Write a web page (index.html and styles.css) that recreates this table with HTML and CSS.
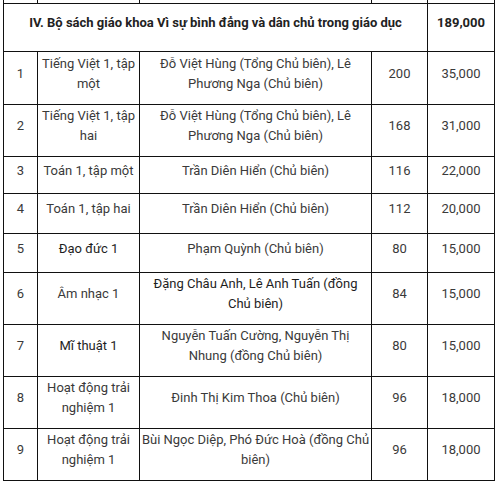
FILE: index.html
```html
<!DOCTYPE html>
<html lang="vi">
<head>
<meta charset="utf-8">
<title>Bộ sách giáo khoa</title>
<link rel="stylesheet" href="styles.css">
</head>
<body>
<table class="books">
  <colgroup>
    <col class="c-no"><col class="c-name"><col class="c-author"><col class="c-pages"><col class="c-price">
  </colgroup>
  <tbody>
    <tr class="prev"><td></td><td></td><td></td><td></td><td></td></tr>
    <tr class="section">
      <td colspan="4"><strong>IV. Bộ sách giáo khoa Vì sự bình đẳng và dân chủ trong giáo dục</strong></td>
      <td><strong>189,000</strong></td>
    </tr>
    <tr class="s53"><td>1</td><td>Tiếng Việt 1, tập một</td><td>Đỗ Việt Hùng (Tổng Chủ biên), Lê Phương Nga (Chủ biên)</td><td>200</td><td>35,000</td></tr>
    <tr class="s51"><td>2</td><td>Tiếng Việt 1, tập hai</td><td>Đỗ Việt Hùng (Tổng Chủ biên), Lê Phương Nga (Chủ biên)</td><td>168</td><td>31,000</td></tr>
    <tr class="s37"><td>3</td><td>Toán 1, tập một</td><td>Trần Diên Hiển (Chủ biên)</td><td>116</td><td>22,000</td></tr>
    <tr class="s40"><td>4</td><td>Toán 1, tập hai</td><td>Trần Diên Hiển (Chủ biên)</td><td>112</td><td>20,000</td></tr>
    <tr class="s39"><td>5</td><td class="dk">Đạo đức 1</td><td>Phạm Quỳnh (Chủ biên)</td><td>80</td><td>15,000</td></tr>
    <tr><td>6</td><td>Âm nhạc 1</td><td class="dk">Đặng Châu Anh, Lê Anh Tuấn (đồng Chủ biên)</td><td>84</td><td>15,000</td></tr>
    <tr class="s50"><td>7</td><td class="dk">Mĩ thuật 1</td><td>Nguyễn Tuấn Cường, Nguyễn Thị Nhung (đồng Chủ biên)</td><td>80</td><td>15,000</td></tr>
    <tr><td>8</td><td>Hoạt động trải nghiệm 1</td><td>Đinh Thị Kim Thoa (Chủ biên)</td><td>96</td><td>18,000</td></tr>
    <tr><td>9</td><td>Hoạt động trải nghiệm 1</td><td>Bùi Ngọc Diệp, Phó Đức Hoà (đồng Chủ biên)</td><td>96</td><td>18,000</td></tr>
  </tbody>
</table>
</body>
</html>
```
FILE: styles.css
```css
html, body {
  margin: 0;
  padding: 0;
  background: #fff;
}

.books {
  margin: -17px 0 0 3px;
  width: 491px;
  border-collapse: collapse;
  table-layout: fixed;
  font-family: Roboto, "Noto Sans", "Liberation Sans", sans-serif;
  font-size: 13px;
  line-height: 20px;
  color: #3a3a3a;
}

.c-no { width: 34px; }
.c-name { width: 102px; }
.c-author { width: 232px; }
.c-pages { width: 56px; }
.c-price { width: 67px; }

.books td {
  border: 1px solid #111;
  padding: 1px 1px 10px;
  text-align: center;
  vertical-align: middle;
}

.books .prev td {
  height: 19px;
  padding: 0;
}

.books .section td {
  height: 36px;
}

.books strong {
  font-weight: 700;
  color: #222;
}

.books .s53 td { height: 41px; }
.books .s51 td { height: 39px; }
.books .s37 td { height: 25px; }
.books .s40 td { height: 28px; }
.books .s39 td { height: 27px; }
.books .s50 td { height: 38px; }

.books .dk {
  color: #1e1e1e;
}
```
